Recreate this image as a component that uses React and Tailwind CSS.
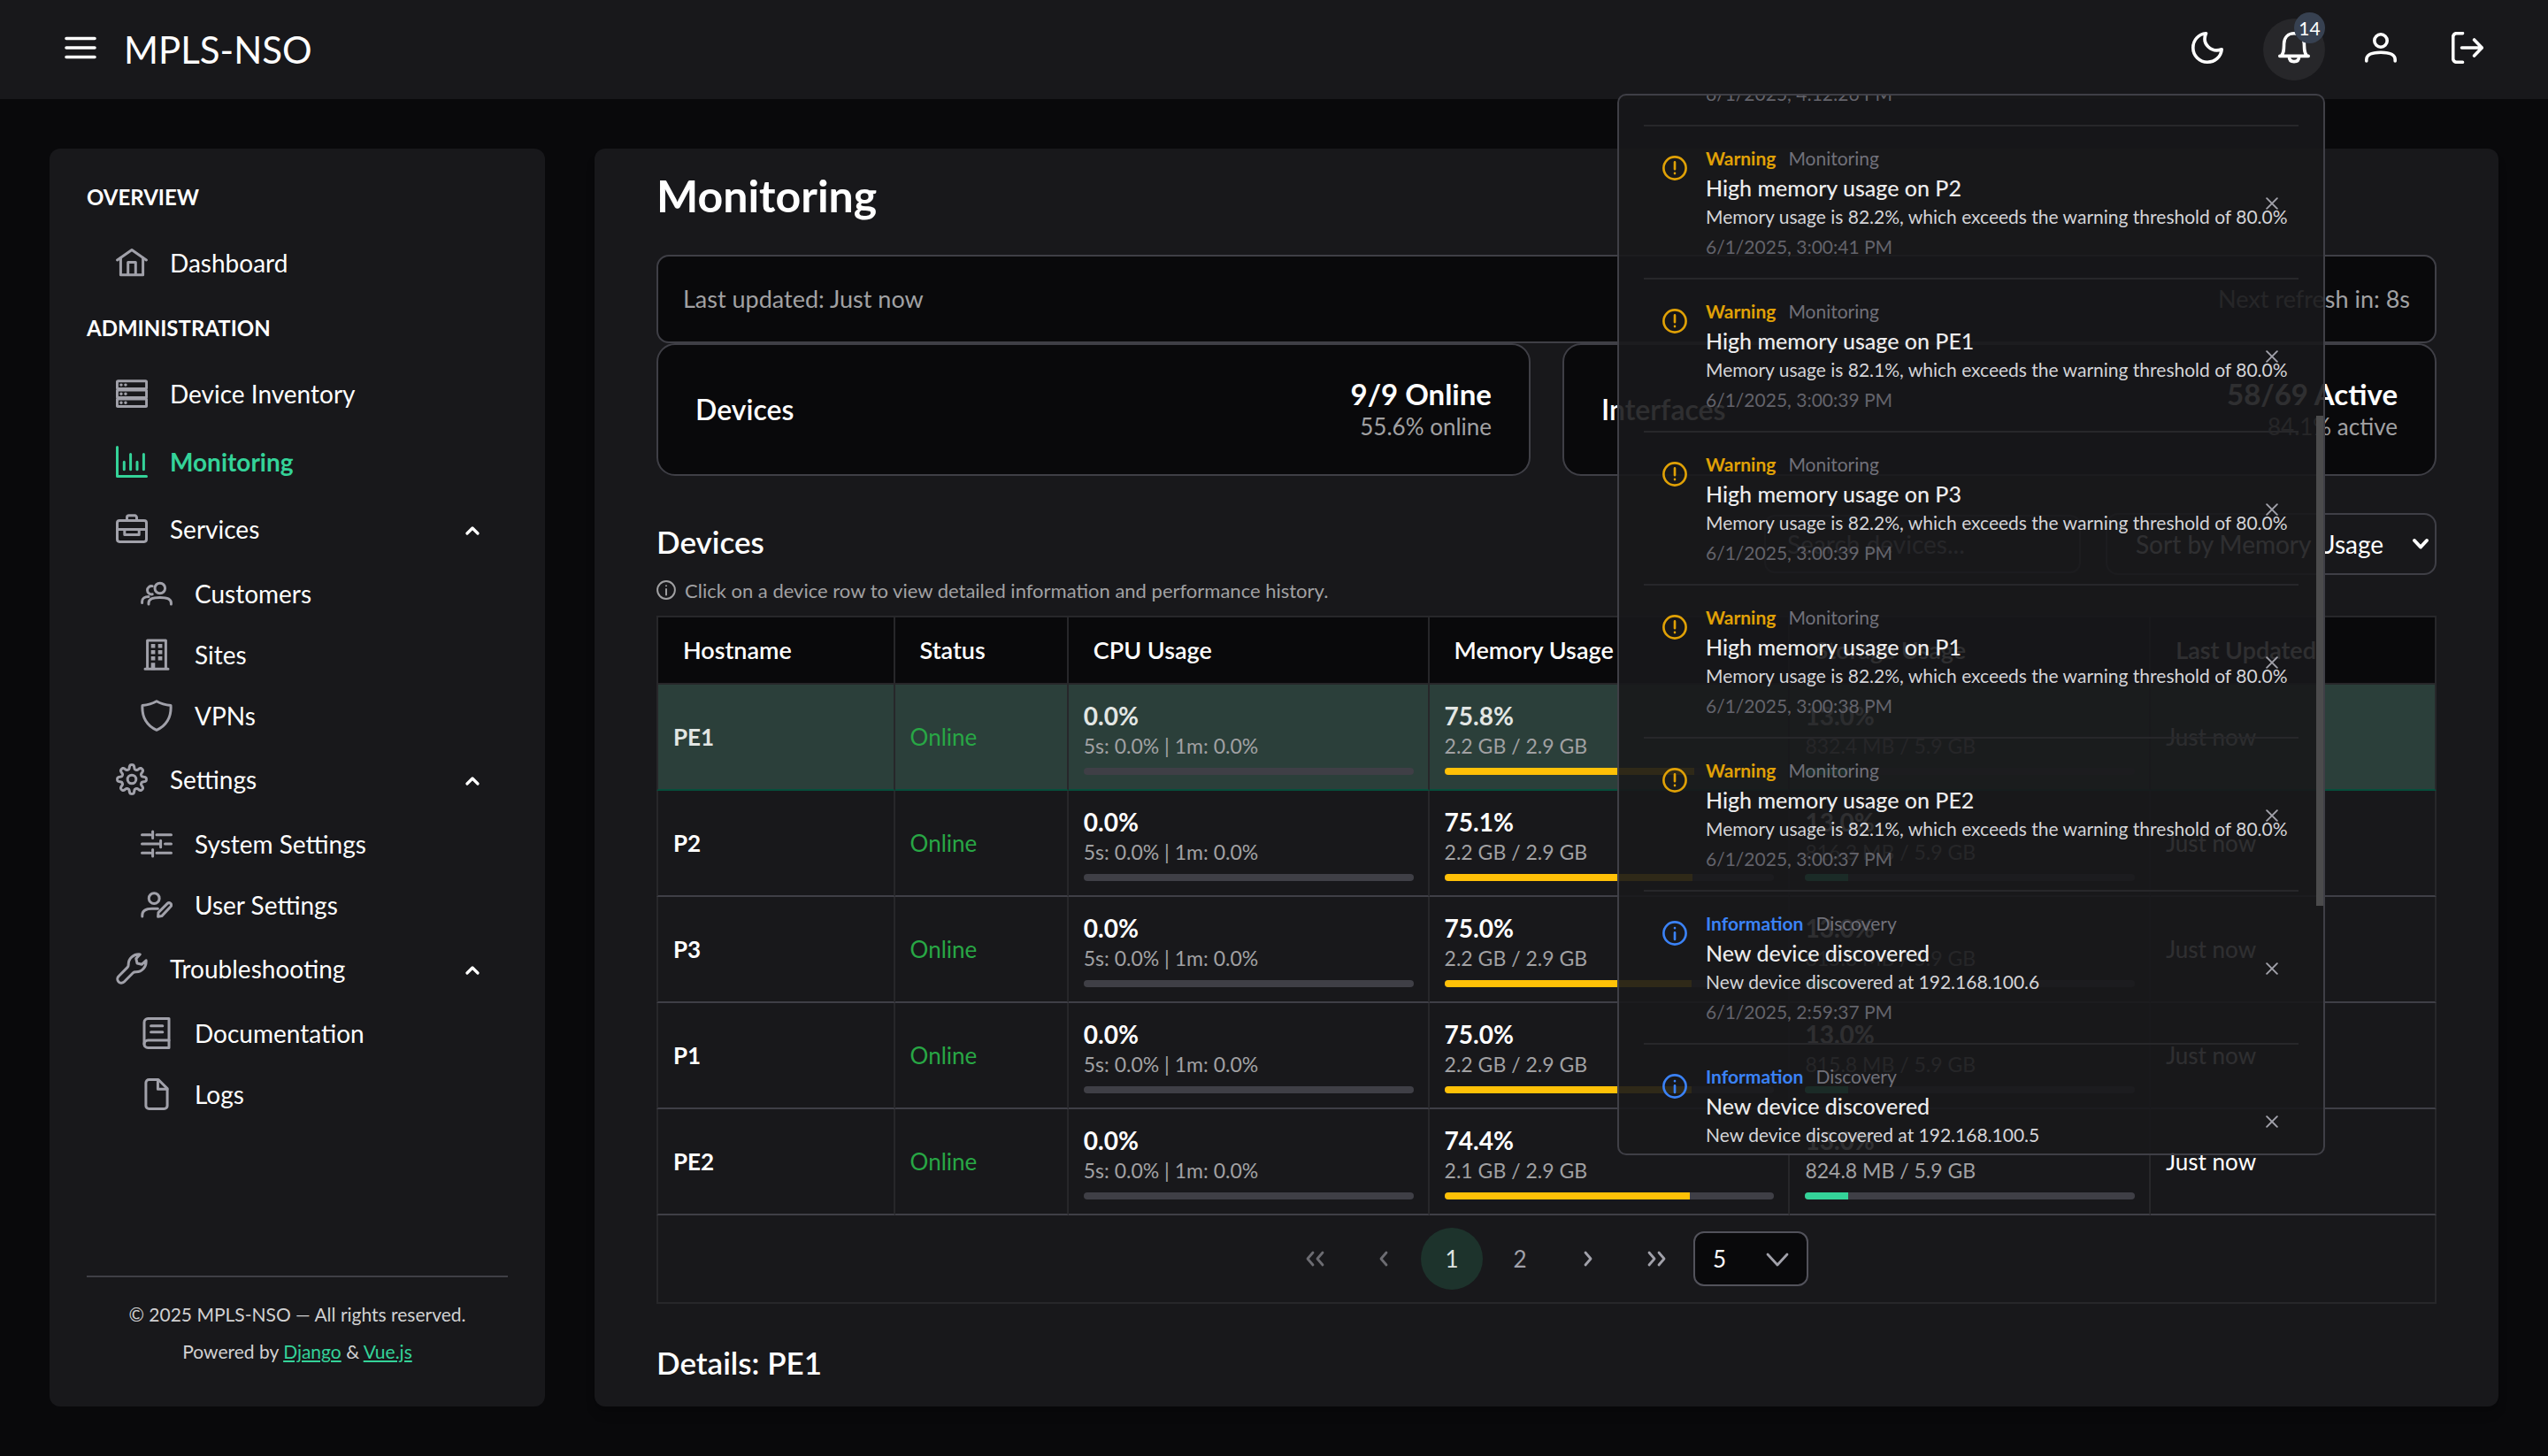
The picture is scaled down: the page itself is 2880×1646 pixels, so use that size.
import React from "react";

const gearPath = (() => {
  const points = [];
  for (let i = 0; i < 240; i++) {
    const t = (i / 240) * Math.PI * 2;
    const r = 14 + (2.4 * Math.tanh(1.8 * Math.cos(8 * t))) / Math.tanh(1.8);
    points.push(`${(18 + r * Math.cos(t)).toFixed(2)} ${(18 + r * Math.sin(t)).toFixed(2)}`);
  }
  return `M${points.join("L")}Z`;
})();

function Glyph({ children, className = "size-9", sw = 3 }) {
  return (
    <svg
      viewBox="0 0 36 36"
      className={`shrink-0 ${className}`}
      fill="none"
      stroke="currentColor"
      strokeWidth={sw}
      strokeLinecap="round"
      strokeLinejoin="round"
      aria-hidden="true"
    >
      {children}
    </svg>
  );
}

const icons = {
  bars: <path d="M2 7.5H34M2 18H34M2 28.5H34" />,
  moon: <path d="M16.5 1.8C8 2.5 1.8 9.2 1.8 18A16.2 16.2 0 0 0 18 34.2C26.7 34.2 33.4 28.2 34.2 19.8C23 24 11 14 16.5 1.8Z" />,
  bell: (
    <>
      <path d="M1.8 27.4H34.2M3.4 27.2C6.6 24 6.4 20 6.6 13.5C6.8 6.2 11.3 1.8 18 1.8S29.2 6.2 29.4 13.5C29.6 20 29.4 24 32.6 27.2" />
      <path d="M12.4 28C12.4 31.6 14.6 33.6 18 33.6S23.6 31.6 23.6 28" />
    </>
  ),
  user: (
    <>
      <circle cx="18" cy="10" r="7.2" />
      <path d="M1.8 33V31.4C1.8 26 8 23.2 18 23.2S34.2 26 34.2 31.4V33" />
    </>
  ),
  signOut: (
    <>
      <path d="M12.5 1.7H5.7A4 4 0 0 0 1.7 5.7V30.3A4 4 0 0 0 5.7 34.3H12.5" />
      <path d="M11.5 18H34M25.6 9L34.3 18L25.6 27" />
    </>
  ),
  home: (
    <>
      <path d="M1.6 15L18 3.6L34.4 15" />
      <path d="M5.4 12.5V31.8H30.6V12.5" />
      <path d="M13.7 31.5V17.6H22.3V31.5" />
    </>
  ),
  server: (
    <>
      <rect x="1.4" y="3.8" width="33.2" height="8.6" rx="1" />
      <rect x="1.4" y="13.9" width="33.2" height="8.6" rx="1" />
      <rect x="1.4" y="24" width="33.2" height="8.6" rx="1" />
      <path d="M5.9 8.1h.1M10.9 8.1h.1M5.9 18.2h.1M10.9 18.2h.1M5.9 28.3h.1M10.9 28.3h.1" strokeWidth="3.4" />
    </>
  ),
  chart: <path d="M1.5 1.5V34.5H34.5M9.3 18.3V26.7M16.6 9.6V26.7M24 18.3V26.7M31.4 9.6V26.7" />,
  briefcase: (
    <>
      <rect x="1.5" y="8.4" width="33" height="24" rx="2.6" />
      <path d="M12.5 8.4V5A2.2 2.2 0 0 1 14.7 2.8H21.3A2.2 2.2 0 0 1 23.5 5V8.4" />
      <path d="M1.5 18.6H34.5M9.8 18.6V24.4H26.2V18.6" />
    </>
  ),
  users: (
    <>
      <circle cx="21.8" cy="12" r="5.8" />
      <path d="M9 30V28.5C9 24.5 14 22.6 21.7 22.6S34.4 24.5 34.4 28.5V30" />
      <path d="M13.2 9.6A4.7 4.7 0 1 0 13.2 18.8M1.6 28.4V27C1.6 23.4 4.6 21.4 9 21.4" />
    </>
  ),
  building: (
    <>
      <path d="M5 34.3H31M7.6 34V2H28.4V34" />
      <path d="M14 8.3h.1M22 8.3h.1M14 15.3h.1M22 15.3h.1M14 22.3h.1M22 22.3h.1M14 29.6V33" strokeWidth="4.6" strokeLinecap="square" />
    </>
  ),
  shield: <path d="M18 1.7C13 4.5 8 5.8 2 6.4C1 20 7.5 30 18 34.3C28.5 30 35 20 34 6.4C28 5.8 23 4.5 18 1.7Z" />,
  cog: (
    <>
      <path d={gearPath} />
      <circle cx="18" cy="18" r="4.8" />
    </>
  ),
  sliders: <path d="M1.5 7.7H11M18 7.7H34.5M13.6 4V11.4M1.5 18H20.6M27.5 18H34.5M22.6 14.3V21.7M1.5 28.3H11M18 28.3H34.5M13.6 24.6V32" />,
  userEdit: (
    <>
      <circle cx="15.2" cy="10.6" r="5.9" />
      <path d="M1.8 31V29.6C1.8 24.8 6 22.2 13 22.2H19.4" />
      <path d="M19.6 31.2L20 26.6L30.2 16.4A2.5 2.5 0 0 1 33.8 20L23.8 30.6Z" />
    </>
  ),
  wrench: (
    <path d="M27.2 1.9C20 1.4 14 6.4 14.2 13.4C14.2 15 13.8 15.8 13 16.6L2.8 27A4.4 4.4 0 0 0 9 33.2L19.4 22.8C20.2 22 21 21.8 22.6 21.8C29.6 22 34.6 16 34.1 8.8L29.4 13.2L24 12L22.8 6.6Z" />
  ),
  book: (
    <>
      <path d="M32 1.5H8.2A4.2 4.2 0 0 0 4 5.7V30.4A4.1 4.1 0 0 0 8.1 34.5H32Z" />
      <path d="M4 30.2A4.2 4.2 0 0 1 8.2 26H32M11.6 9.8H24.8M11.6 16.8H24.8" />
    </>
  ),
  file: (
    <>
      <path d="M20 1.5H9.5A3.6 3.6 0 0 0 5.9 5.1V30.9A3.6 3.6 0 0 0 9.5 34.5H26.5A3.6 3.6 0 0 0 30.1 30.9V11.6Z" />
      <path d="M19.4 2V12.2H30" />
    </>
  ),
};

function HeaderButton({ icon, label, active }) {
  return (
    <button
      type="button"
      aria-label={label}
      className={`flex size-[70px] items-center justify-center rounded-full pb-1 ${active ? "bg-[#27272a]" : ""}`}
    >
      <Glyph sw={3.6}>{icons[icon]}</Glyph>
    </button>
  );
}

const notifications = [
  { kind: "Warning", source: "Monitoring", title: "High memory usage on P2", body: "Memory usage is 82.2%, which exceeds the warning threshold of 80.0%", time: "6/1/2025, 3:00:41 PM" },
  { kind: "Warning", source: "Monitoring", title: "High memory usage on PE1", body: "Memory usage is 82.1%, which exceeds the warning threshold of 80.0%", time: "6/1/2025, 3:00:39 PM" },
  { kind: "Warning", source: "Monitoring", title: "High memory usage on P3", body: "Memory usage is 82.2%, which exceeds the warning threshold of 80.0%", time: "6/1/2025, 3:00:39 PM" },
  { kind: "Warning", source: "Monitoring", title: "High memory usage on P1", body: "Memory usage is 82.2%, which exceeds the warning threshold of 80.0%", time: "6/1/2025, 3:00:38 PM" },
  { kind: "Warning", source: "Monitoring", title: "High memory usage on PE2", body: "Memory usage is 82.1%, which exceeds the warning threshold of 80.0%", time: "6/1/2025, 3:00:37 PM" },
  { kind: "Information", source: "Discovery", title: "New device discovered", body: "New device discovered at 192.168.100.6", time: "6/1/2025, 2:59:37 PM" },
  { kind: "Information", source: "Discovery", title: "New device discovered", body: "New device discovered at 192.168.100.5" },
];

function Notification({ item }) {
  const warning = item.kind === "Warning";
  return (
    <li className="flex h-[173px] shrink-0 items-start border-b-2 border-[#27272a] pl-[21px] pr-[19px] pt-5">
      <Glyph className={`mt-[13px] size-7 ${warning ? "text-[#e0a106]" : "text-[#3b82f6]"}`} sw={3.4}>
        <circle cx="18" cy="18" r="16.2" />
        {warning ? <path d="M18 9.5V19.5M18 25.6v.2" /> : <path d="M18 17V27M18 10.4v.2" />}
      </Glyph>
      <div className="ml-[21px] min-w-0 flex-1 whitespace-nowrap">
        <p className="flex gap-3.5 text-[21px] leading-8">
          <span className={`font-bold ${warning ? "text-[#e0a106]" : "text-[#3b82f6]"}`}>{item.kind}</span>
          <span className="text-[#71717a]">{item.source}</span>
        </p>
        <p className="text-[25px] font-medium leading-[34px] text-[#ececed]">{item.title}</p>
        <p className="text-[21px] leading-8 text-[#d4d4d8]">{item.body}</p>
        {item.time && <p className="text-[21px] leading-[35px] text-[#63636b]">{item.time}</p>}
      </div>
      <button type="button" aria-label="Dismiss" className="mt-[51px] flex h-8 w-[22px] items-center justify-center text-[#a1a1aa]">
        <Glyph className="size-3.5" sw={5}>
          <path d="M3 3L33 33M33 3L3 33" />
        </Glyph>
      </button>
    </li>
  );
}

function NotificationPanel() {
  return (
    <section
      aria-label="Notifications"
      className="absolute right-0 top-full z-20 mt-[15px] h-[1200px] w-[800px] overflow-hidden rounded-[10px] border-2 border-[#3f3f46] bg-[#18181b]/90 px-7"
    >
      <ul className="flex flex-col">
        <li className="flex h-[35px] shrink-0 flex-col justify-end overflow-hidden border-b-2 border-[#27272a] pb-[18px] pl-[70px]">
          <p className="text-[21px] leading-[35px] text-[#63636b]">6/1/2025, 4:12:26 PM</p>
        </li>
        {notifications.map((item, i) => (
          <Notification key={i} item={item} />
        ))}
      </ul>
      <span className="absolute right-0 top-[362px] h-[554px] w-2 bg-[#4b4b4c]" />
    </section>
  );
}

function NavItem({ icon, label, active }) {
  return (
    <li>
      <a href="#" className={`flex h-[77px] items-center gap-[25px] pl-[33px] ${active ? "font-bold text-[#34d399]" : ""}`}>
        <Glyph className={`size-9 ${active ? "" : "text-[#a1a1aa]"}`}>{icons[icon]}</Glyph>
        {label}
      </a>
    </li>
  );
}

function NavGroup({ icon, label, items }) {
  return (
    <li>
      <button type="button" aria-expanded="true" className="flex h-[76px] w-full items-center gap-[25px] pl-[33px] pr-8 text-left">
        <Glyph className="size-9 text-[#a1a1aa]">{icons[icon]}</Glyph>
        <span className="flex-1">{label}</span>
        <svg viewBox="0 0 16 10" className="mt-1 h-2.5 w-4" fill="none" stroke="currentColor" strokeWidth="3.2" strokeLinecap="round" strokeLinejoin="round" aria-hidden="true">
          <path d="M2 8L8 2L14 8" />
        </svg>
      </button>
      <ul>
        {items.map(([subIcon, subLabel]) => (
          <li key={subLabel}>
            <a href="#" className="flex h-[69px] items-center gap-[25px] pl-[61px]">
              <Glyph className="size-9 text-[#a1a1aa]">{icons[subIcon]}</Glyph>
              {subLabel}
            </a>
          </li>
        ))}
      </ul>
    </li>
  );
}

function Sidebar() {
  return (
    <aside className="flex w-[560px] shrink-0 flex-col rounded-xl bg-[#18181b] px-[42px] pt-5 text-[28px]">
      <nav>
        <h2 className="flex h-[70px] items-center text-[24px] font-bold">OVERVIEW</h2>
        <ul>
          <NavItem icon="home" label="Dashboard" />
        </ul>
        <h2 className="flex h-[71px] items-center text-[24px] font-bold">ADMINISTRATION</h2>
        <ul>
          <NavItem icon="server" label="Device Inventory" />
          <NavItem icon="chart" label="Monitoring" active />
          <NavGroup icon="briefcase" label="Services" items={[["users", "Customers"], ["building", "Sites"], ["shield", "VPNs"]]} />
          <NavGroup icon="cog" label="Settings" items={[["sliders", "System Settings"], ["userEdit", "User Settings"]]} />
          <NavGroup icon="wrench" label="Troubleshooting" items={[["book", "Documentation"], ["file", "Logs"]]} />
        </ul>
      </nav>
      <footer className="mt-auto border-t-2 border-[#3f3f46] pb-[41px] pt-[21px] text-center text-[21px] leading-[42px] text-[#d1d1d2]">
        <p>© 2025 MPLS-NSO — All rights reserved.</p>
        <p>
          Powered by <a href="#" className="text-[#34d399] underline">Django</a> &amp;{" "}
          <a href="#" className="text-[#34d399] underline">Vue.js</a>
        </p>
      </footer>
    </aside>
  );
}

const devices = [
  { name: "PE1", memory: 75.8, used: "2.2 GB / 2.9 GB", storage: "832.4 MB / 5.9 GB", selected: true },
  { name: "P2", memory: 75.1, used: "2.2 GB / 2.9 GB", storage: "816.3 MB / 5.9 GB" },
  { name: "P3", memory: 75.0, used: "2.2 GB / 2.9 GB", storage: "815.8 MB / 5.9 GB" },
  { name: "P1", memory: 75.0, used: "2.2 GB / 2.9 GB", storage: "815.8 MB / 5.9 GB" },
  { name: "PE2", memory: 74.4, used: "2.1 GB / 2.9 GB", storage: "824.8 MB / 5.9 GB" },
];

function Usage({ value, detail, color }) {
  return (
    <div className="pt-0.5">
      <p className="text-[28px] font-bold leading-[34px]">{value.toFixed(1)}%</p>
      <p className="text-[23px] leading-[34px] text-[#a1a1a3]">{detail}</p>
      <div className="mt-2 h-2 overflow-hidden rounded bg-[#3f3f46]">
        <div className={`h-full ${color}`} style={{ width: `${value}%` }} />
      </div>
    </div>
  );
}

function DeviceTable() {
  const head = "h-[78px] border-b-2 border-r-2 border-t-2 border-[#27272a] px-7 text-left text-[27px] font-semibold first:border-l-2";
  const cell = "h-[120px] border-b-2 border-r-2 border-r-[#27272a] pl-[17px] pr-4 first:border-l-2 first:border-l-[#27272a]";
  return (
    <table className="w-full table-fixed border-separate border-spacing-0 text-[26px]">
      <thead className="bg-[#09090b]">
        <tr>
          <th scope="col" className={`${head} w-[13.4%]`}>Hostname</th>
          <th scope="col" className={`${head} w-[9.75%]`}>Status</th>
          <th scope="col" className={`${head} w-[20.27%]`}>CPU Usage</th>
          <th scope="col" className={`${head} w-[20.27%]`}>Memory Usage</th>
          <th scope="col" className={`${head} w-[20.27%]`}>Storage Usage</th>
          <th scope="col" className={head}>Last Updated</th>
        </tr>
      </thead>
      <tbody>
        {devices.map((d) => {
          const c = `${cell} ${d.selected ? "border-b-[#064e3b] bg-[#2b3f3a] text-[#e2e6e4]" : "border-b-[#3f3f46]"}`;
          return (
            <tr key={d.name}>
              <td className={`${c} font-bold`}>{d.name}</td>
              <td className={c}><span className="text-[#28a745]">Online</span></td>
              <td className={c}><Usage value={0} detail="5s: 0.0% | 1m: 0.0%" color="bg-[#34d399]" /></td>
              <td className={c}><Usage value={d.memory} detail={d.used} color="bg-[#ffc107]" /></td>
              <td className={c}><Usage value={13} detail={d.storage} color="bg-[#34d399]" /></td>
              <td className={c}>Just now</td>
            </tr>
          );
        })}
      </tbody>
    </table>
  );
}

function PageButton({ label, children, active, dim }) {
  return (
    <button
      type="button"
      aria-label={label}
      className={`flex size-[70px] items-center justify-center rounded-full ${active ? "bg-[#1d332c] text-[#dfe3e1]" : dim ? "text-[#6c6c72]" : "text-[#a1a1aa]"}`}
    >
      {children}
    </button>
  );
}

function Chevrons({ d }) {
  return (
    <svg viewBox="0 0 22 18" className="h-[18px] w-[22px]" fill="none" stroke="currentColor" strokeWidth="2.8" strokeLinecap="round" strokeLinejoin="round" aria-hidden="true">
      <path d={d} />
    </svg>
  );
}

function Paginator() {
  return (
    <nav aria-label="Pages" className="flex items-center justify-center gap-[7px] border-x-2 border-b-2 border-[#27272a] py-3.5 text-[26px]">
      <PageButton label="First page" dim><Chevrons d="M8 2L2 9L8 16M19 2L13 9L19 16" /></PageButton>
      <PageButton label="Previous page" dim><Chevrons d="M14 2L8 9L14 16" /></PageButton>
      <PageButton active>1</PageButton>
      <PageButton>2</PageButton>
      <PageButton label="Next page"><Chevrons d="M8 2L14 9L8 16" /></PageButton>
      <PageButton label="Last page"><Chevrons d="M3 2L9 9L3 16M14 2L20 9L14 16" /></PageButton>
      <div className="relative">
        <select aria-label="Rows per page" className="h-[62px] w-[130px] appearance-none rounded-xl border-2 border-[#52525b] bg-[#09090b] px-5">
          <option>5</option>
        </select>
        <svg viewBox="0 0 26 16" className="pointer-events-none absolute right-[22px] top-6 h-4 w-[26px] text-[#a1a1aa]" fill="none" stroke="currentColor" strokeWidth="2.8" strokeLinecap="round" strokeLinejoin="round" aria-hidden="true">
          <path d="M2 2L13 14L24 2" />
        </svg>
      </div>
    </nav>
  );
}

function SummaryCard({ title, value, detail }) {
  return (
    <div className="flex h-[150px] items-center justify-between rounded-[21px] border-2 border-[#3f3f46] bg-[#09090b] px-[42px]">
      <h3 className="text-[32px] font-semibold">{title}</h3>
      <div className="text-right">
        <p className="text-[33px] font-bold leading-[38px]">{value}</p>
        <p className="text-[26px] leading-9 text-[#a1a1a3]">{detail}</p>
      </div>
    </div>
  );
}

function Monitoring() {
  return (
    <main className="min-w-0 flex-1 overflow-hidden rounded-xl bg-[#18181b] px-[70px] shadow-lg">
      <h1 className="pb-9 pt-[22px] text-[50px] font-bold leading-[62px]">Monitoring</h1>
      <div className="flex h-[100px] items-center justify-between rounded-[14px] border-2 border-[#3f3f46] bg-[#09090b] px-7 text-[27px] text-[#a1a1a3]">
        <span>Last updated: Just now</span>
        <span>Next refresh in: 8s</span>
      </div>
      <div className="grid grid-cols-2 gap-9">
        <SummaryCard title="Devices" value="9/9 Online" detail="55.6% online" />
        <SummaryCard title="Interfaces" value="58/69 Active" detail="84.1% active" />
      </div>
      <div className="mt-[42px] flex h-[70px] items-center justify-between">
        <h2 className="pb-1.5 text-[35px] font-semibold">Devices</h2>
        <div className="flex items-center gap-7 text-[28px]">
          <input
            type="text"
            aria-label="Search devices"
            placeholder="Search devices..."
            className="h-[66px] w-[358px] rounded-xl border-2 border-[#3f3f46] bg-[#18181b] px-6 placeholder:text-[#a1a1aa]"
          />
          <div className="relative">
            <select aria-label="Sort by" className="h-[70px] w-[374px] appearance-none rounded-[14px] border-2 border-[#3f3f46] bg-[#18181b] px-8">
              <option>Sort by Memory Usage</option>
            </select>
            <svg viewBox="0 0 20 14" className="pointer-events-none absolute right-2 top-7 h-3.5 w-5" fill="none" stroke="currentColor" strokeWidth="4" strokeLinecap="round" strokeLinejoin="round" aria-hidden="true">
              <path d="M3 3L10 10.5L17 3" />
            </svg>
          </div>
        </div>
      </div>
      <p className="flex h-[46px] items-center gap-2.5 pb-3 text-[22px] text-[#a1a1a3]">
        <Glyph className="size-[22px]" sw={3.2}>
          <circle cx="18" cy="18" r="16.2" />
          <path d="M18 16.5V27M18 10v.2" />
        </Glyph>
        Click on a device row to view detailed information and performance history.
      </p>
      <DeviceTable />
      <Paginator />
      <h2 className="pt-[43px] text-[35px] font-semibold leading-[46px]">Details: PE1</h2>
    </main>
  );
}

export default function App() {
  return (
    <div className="flex h-screen flex-col bg-[#09090b] text-white [font-family:Lato,'Liberation_Sans',sans-serif]">
      <header className="flex h-28 shrink-0 items-center bg-[#18181b] px-14">
        <HeaderButton icon="bars" label="Toggle menu" />
        <a href="#" className="ml-3.5 text-[42px]">MPLS-NSO</a>
        <div className="ml-auto flex gap-7">
          <HeaderButton icon="moon" label="Dark mode" />
          <div className="relative">
            <HeaderButton icon="bell" label="Notifications" active />
            <span className="absolute -top-[7px] right-0 flex size-[35px] items-center justify-center rounded-full bg-[#374151] text-[21px]">14</span>
            <NotificationPanel />
          </div>
          <HeaderButton icon="user" label="Profile" />
          <HeaderButton icon="signOut" label="Sign out" />
        </div>
      </header>
      <div className="flex min-h-0 flex-1 gap-14 p-14">
        <Sidebar />
        <Monitoring />
      </div>
    </div>
  );
}
